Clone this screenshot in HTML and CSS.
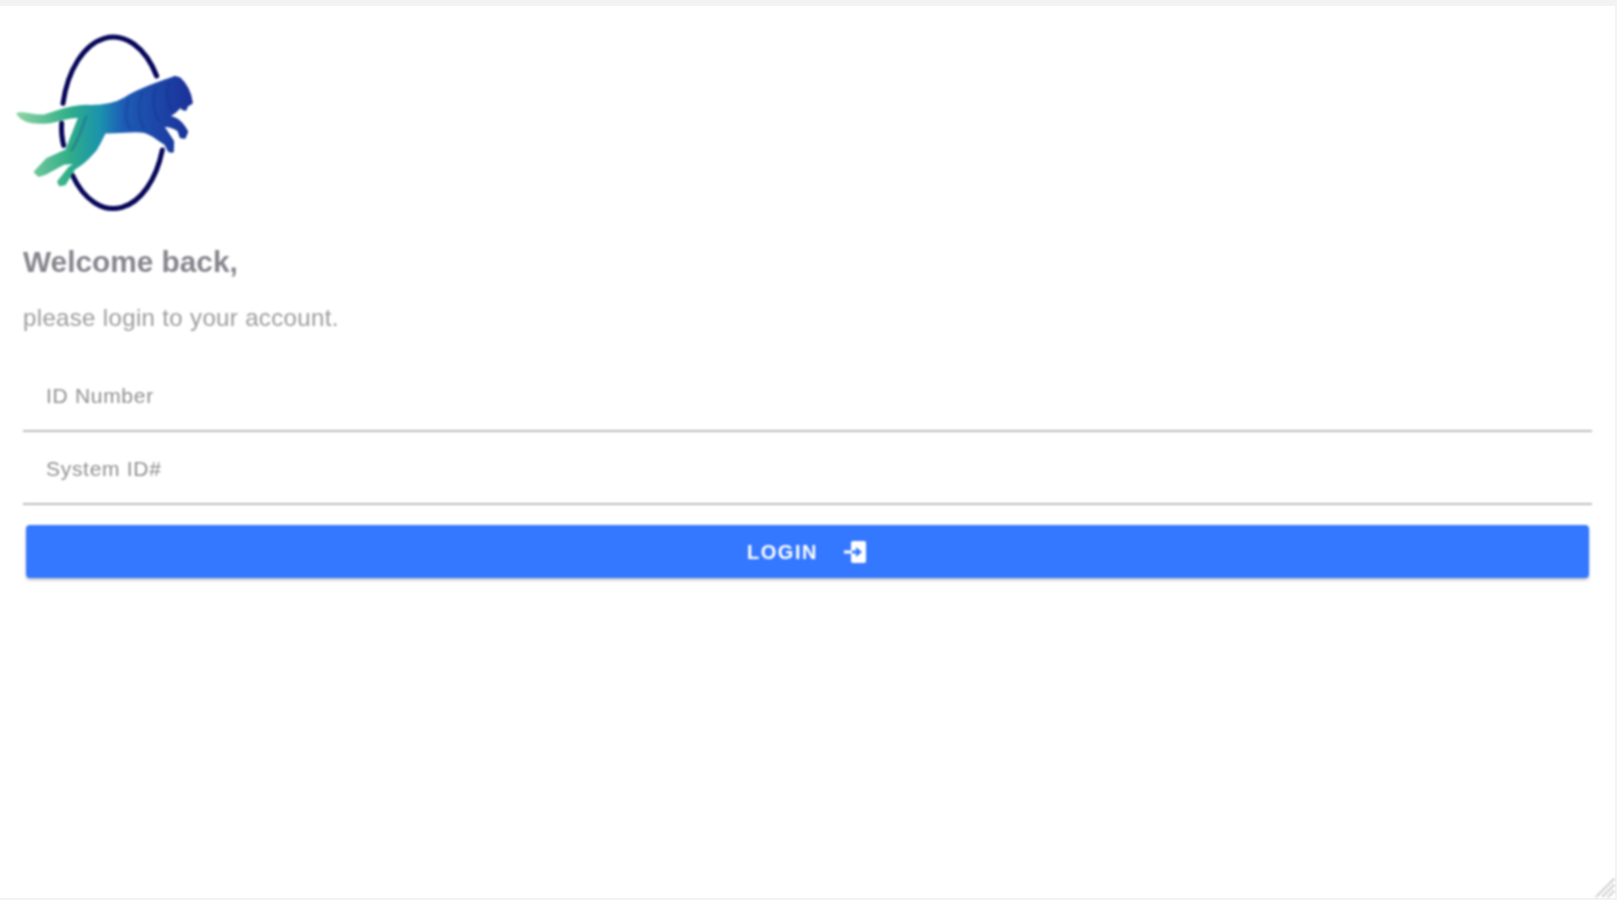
FILE: index.html
```html
<!DOCTYPE html>
<html lang="en">
<head>
<meta charset="utf-8">
<title>Login</title>
<link rel="stylesheet" href="styles.css">
</head>
<body>
<main class="card">
  <svg class="logo soft" viewBox="0 0 780 690" aria-label="Logo">
    <defs>
      <linearGradient id="fur" x1="50" y1="0" x2="580" y2="0" gradientUnits="userSpaceOnUse">
        <stop offset="0" stop-color="#8fd3a4"/>
        <stop offset="0.3" stop-color="#2fae88"/>
        <stop offset="0.47" stop-color="#1b93ae"/>
        <stop offset="0.6" stop-color="#1d5db6"/>
        <stop offset="1" stop-color="#1b2f98"/>
      </linearGradient>
    </defs>
    <g class="hoop">
      <path d="M189 310 A155 257 0 0 1 470 228"/>
      <path d="M185 370 Q183 405 191 436"/>
      <path d="M217 525 A155 257 0 0 0 487 450"/>
    </g>
    <path class="fur" d="M54 342 C75 336 100 352 135 347 C170 338 200 320 260 319 C300 320 340 318 372 298 C410 270 470 252 525 232 L538 236 C556 252 570 280 574 308 L560 316 L556 328 L548 326 L546 314 C535 326 520 340 500 352 C525 350 545 368 560 395 L553 412 L543 410 L536 390 C520 380 505 376 486 376 L518 425 L517 454 L508 452 L496 430 C470 415 455 398 430 394 C400 388 360 398 314 396 L285 450 L240 486 L190 490 L135 520 L117 526 L106 516 L142 478 L200 452 L226 385 L240 350 C215 345 190 358 150 365 C110 370 70 366 54 342 Z"/>
    <path class="fur" d="M300 412 L306 408 C296 440 265 480 222 505 L194 551 L180 554 L176 545 L208 505 C250 480 280 445 300 412 Z"/>
    <g class="stripes">
      <path d="M385 300 C375 330 375 365 390 385"/>
      <path d="M425 280 C412 320 415 360 432 385"/>
      <path d="M468 262 C455 300 460 340 478 362"/>
      <path d="M505 250 C498 280 502 310 515 330"/>
      <path d="M258 350 C245 390 235 420 215 450"/>
    </g>
  </svg>

  <h1 class="title soft">Welcome back,</h1>
  <p class="subtitle soft">please login to your account.</p>

  <form class="form soft">
    <input class="field" type="text" placeholder="ID Number">
    <input class="field" type="text" placeholder="System ID#">
    <button class="login" type="button">
      <span class="login-label">LOGIN</span>
      <svg class="login-icon" viewBox="0 0 24 24">
        <path class="door" d="M9 1h11a2 2 0 0 1 2 2v18a2 2 0 0 1-2 2H9a2 2 0 0 1-2-2V3a2 2 0 0 1 2-2z"/>
        <path class="stem" d="M0 10.5h8v3H0z"/>
        <path class="arrow" d="M8 10.5h4V7l6 5-6 5v-3.500H8z"/>
      </svg>
    </button>
  </form>
  <svg class="grip soft" viewBox="0 0 22 22">
    <path d="M21 3 L3 21 M21 9 L9 21 M21 15 L15 21"/>
  </svg>
</main>
</body>
</html>
```

FILE: styles.css
```css
html, body {
  margin: 0;
  height: 100%;
  background: #f3f3f3;
  overflow: hidden;
}

body {
  font-family: "Liberation Sans", Arial, sans-serif;
  padding: 6px 2px 2px 0;
  box-sizing: border-box;
}

.card {
  position: relative;
  background: #fff;
  height: 100%;
  box-sizing: border-box;
  padding: 0 23px;
  display: flex;
  flex-direction: column;
}

.soft {
  filter: blur(0.8px);
}

.logo {
  display: block;
  width: 260px;
  height: 230px;
  margin: -6px 0 0 -23px;
  flex: none;
}

.hoop path {
  fill: none;
  stroke: #07075a;
  stroke-width: 15;
  stroke-linecap: round;
}

.fur {
  fill: url(#fur);
  stroke: url(#fur);
  stroke-width: 9;
  stroke-linejoin: round;
}

.stripes path {
  fill: none;
  stroke: #10247f;
  stroke-opacity: 0.22;
  stroke-width: 9;
  stroke-linecap: round;
}

.title {
  margin: 15px 0 0;
  font-size: 29.800px;
  line-height: 34px;
  font-weight: 700;
  color: #86868e;
}

.subtitle {
  margin: 26px 0 0;
  font-size: 24px;
  line-height: 26px;
  font-weight: 400;
  letter-spacing: 0.35px;
  color: #9c9c9f;
}

.form {
  display: flex;
  flex-direction: column;
  margin-top: 28px;
}

.field {
  display: block;
  width: 100%;
  height: 73px;
  box-sizing: border-box;
  padding: 2px 23px 0;
  border: 0;
  border-bottom: 2px solid #bdbdbd;
  outline: 0;
  background: transparent;
  font-family: inherit;
  font-size: 21px;
  letter-spacing: 0.7px;
}

.field::placeholder {
  color: #8f8f8f;
  opacity: 1;
}

.login {
  margin: 20px 3px 0;
  height: 53px;
  border: 0;
  border-radius: 4px;
  background: #3478ff;
  box-shadow: 0 2px 3px rgba(0, 0, 0, 0.25);
  color: #fff;
  font-family: inherit;
  font-size: 20px;
  font-weight: 700;
  letter-spacing: 1.5px;
  display: flex;
  align-items: center;
  justify-content: center;
  gap: 26px;
  padding: 0;
}

.login-label {
  padding-top: 2px;
}

.login-icon {
  width: 24px;
  height: 24px;
}

.door,
.stem {
  fill: #fff;
}

.arrow {
  fill: #3478ff;
}

.grip {
  position: absolute;
  right: 0;
  bottom: 0;
  width: 22px;
  height: 22px;
}

.grip path {
  fill: none;
  stroke: #a8a8a8;
  stroke-width: 2;
  stroke-dasharray: 2 1.500;
}
```
